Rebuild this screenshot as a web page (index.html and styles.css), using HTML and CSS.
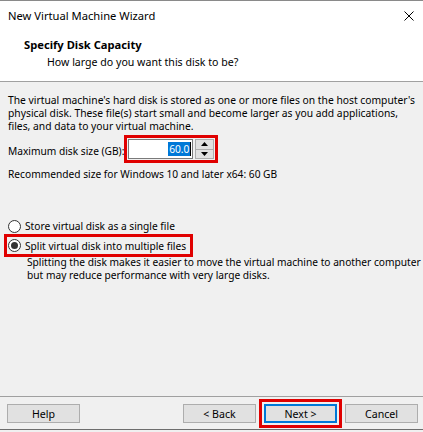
FILE: index.html
```html
<!DOCTYPE html>
<html lang="en">
<head>
    <meta charset="UTF-8">
    <meta name="viewport" content="width=device-width, initial-scale=1.0">
    <title>New Virtual Machine Wizard</title>
    <link rel="stylesheet" href="styles.css">
</head>
<body>
    <div class="window">
        <div class="titlebar">
            <span class="title">New Virtual Machine Wizard</span>
            <svg class="close" width="10" height="10" viewBox="0 0 10 10">
                <path d="M0.5 0.5 L9.5 9.5 M9.5 0.5 L0.5 9.5" stroke="#000" stroke-width="1" fill="none"/>
            </svg>
        </div>

        <div class="header">
            <div class="header-title">Specify Disk Capacity</div>
            <div class="header-sub">How large do you want this disk to be?</div>
        </div>

        <div class="content">
            <p class="intro">The virtual machine's hard disk is stored as one or more files on the host computer's<br>
                physical disk. These file(s) start small and become larger as you add applications,<br>
                files, and data to your virtual machine.</p>

            <div class="size-row">
                <label class="size-label">Maximum disk size (GB):</label>
                <div class="spin marked">
                    <div class="spin-input"><span class="selected">60.0</span><span class="caret"></span></div>
                    <div class="spin-buttons">
                        <div class="spin-btn">
                            <svg width="7" height="4" viewBox="0 0 7 4"><path d="M3.5 0 L7 4 L0 4 Z" fill="#000"/></svg>
                        </div>
                        <div class="spin-btn">
                            <svg width="7" height="4" viewBox="0 0 7 4"><path d="M0 0 L7 0 L3.5 4 Z" fill="#000"/></svg>
                        </div>
                    </div>
                </div>
            </div>

            <p class="recommended">Recommended size for Windows 10 and later x64: 60 GB</p>

            <div class="options">
                <div class="radio">
                    <span class="radio-dot"></span>
                    <span>Store virtual disk as a single file</span>
                </div>
                <div class="radio checked marked">
                    <span class="radio-dot"></span>
                    <span>Split virtual disk into multiple files</span>
                </div>
                <p class="radio-desc">Splitting the disk makes it easier to move the virtual machine to another computer<br>
                    but may reduce performance with very large disks.</p>
            </div>
        </div>

        <div class="footer">
            <button class="btn">Help</button>
            <div class="footer-right">
                <button class="btn">&lt; Back</button>
                <button class="btn btn-default marked">Next &gt;</button>
                <button class="btn">Cancel</button>
            </div>
        </div>
    </div>
</body>
</html>
```

FILE: styles.css
```css
/* Base */
body {
    margin: 0;
    background-color: #f0f0f0;
    font-family: "Noto Sans", "Open Sans", sans-serif;
    font-size: 10.2px;
    color: #000;
}

p {
    margin: 0;
    white-space: nowrap;
}

.window {
    width: 423px;
    height: 430px;
    display: flex;
    flex-direction: column;
    border-top: 1px solid #8a8a8a;
    border-bottom: 1px solid #6d6d6d;
    box-sizing: border-box;
    background-color: #f0f0f0;
}

/* Title bar */
.titlebar {
    height: 29px;
    background-color: #fff;
    display: flex;
    align-items: center;
    justify-content: space-between;
    padding: 0 9px 0 8px;
    font-size: 11.2px;
}

.close {
    display: block;
}

/* Wizard header */
.header {
    background-color: #fff;
    border-bottom: 1px solid #a0a0a0;
    padding: 8px 0 12px 24px;
}

.header-title {
    font-weight: bold;
    font-size: 11.2px;
    line-height: 14px;
}

.header-sub {
    font-size: 10.6px;
    line-height: 14px;
    margin-top: 3px;
    padding-left: 23px;
}

/* Content */
.content {
    flex: 1;
    padding: 12px 8px 0 8px;
}

.intro {
    font-size: 10.3px;
    line-height: 13px;
}

.size-row {
    display: flex;
    align-items: center;
    margin-top: 6px;
    gap: 4px;
}

.size-label {
    padding-top: 3px;
}

.spin {
    display: flex;
    height: 20px;
}

.spin-input {
    width: 65px;
    height: 20px;
    box-sizing: border-box;
    border: 1px solid #7a7a7a;
    background-color: #fff;
    display: flex;
    align-items: center;
    justify-content: flex-end;
    padding-right: 1px;
}

.selected {
    background-color: #0078d7;
    color: #fff;
    line-height: 14px;
    padding: 0 1px;
}

.caret {
    width: 1px;
    height: 14px;
    background-color: #000;
}

.spin-buttons {
    display: flex;
    flex-direction: column;
    margin-left: 2px;
    width: 19px;
}

.spin-btn {
    flex: 1;
    background-color: #e1e1e1;
    border: 1px solid #adadad;
    display: flex;
    align-items: center;
    justify-content: center;
}

.spin-btn + .spin-btn {
    border-top: none;
}

.spin-btn svg {
    display: block;
}

.recommended {
    margin-top: 9px;
    line-height: 13px;
}

/* Radio options */
.options {
    margin-top: 37px;
}

.radio {
    display: flex;
    align-items: center;
    width: fit-content;
    height: 16px;
    gap: 4px;
}

.radio.checked {
    margin-top: 4px;
    height: 15px;
    padding-right: 3px;
}

.radio-dot {
    width: 13px;
    height: 13px;
    box-sizing: border-box;
    border: 1px solid #333;
    border-radius: 50%;
    background-color: #fff;
    position: relative;
}

.radio.checked .radio-dot::after {
    content: "";
    position: absolute;
    left: 2px;
    top: 2px;
    width: 7px;
    height: 7px;
    border-radius: 50%;
    background-color: #333;
}

.radio-desc {
    margin-top: 3px;
    padding-left: 19px;
    line-height: 13px;
}

/* Red annotation boxes */
.marked {
    outline: 3px solid #e00000;
    outline-offset: 1px;
}

/* Footer */
.footer {
    border-top: 1px solid #a0a0a0;
    display: flex;
    justify-content: space-between;
    padding: 7px 5px 6px 7px;
}

.footer-right {
    display: flex;
    gap: 8px;
}

.btn {
    width: 73px;
    height: 19px;
    padding: 0;
    font-family: inherit;
    font-size: 10.6px;
    color: #000;
    background-color: #e1e1e1;
    border: 1px solid #adadad;
}

.btn-default {
    border: 2px solid #0078d7;
    outline-offset: 2px;
}
```
